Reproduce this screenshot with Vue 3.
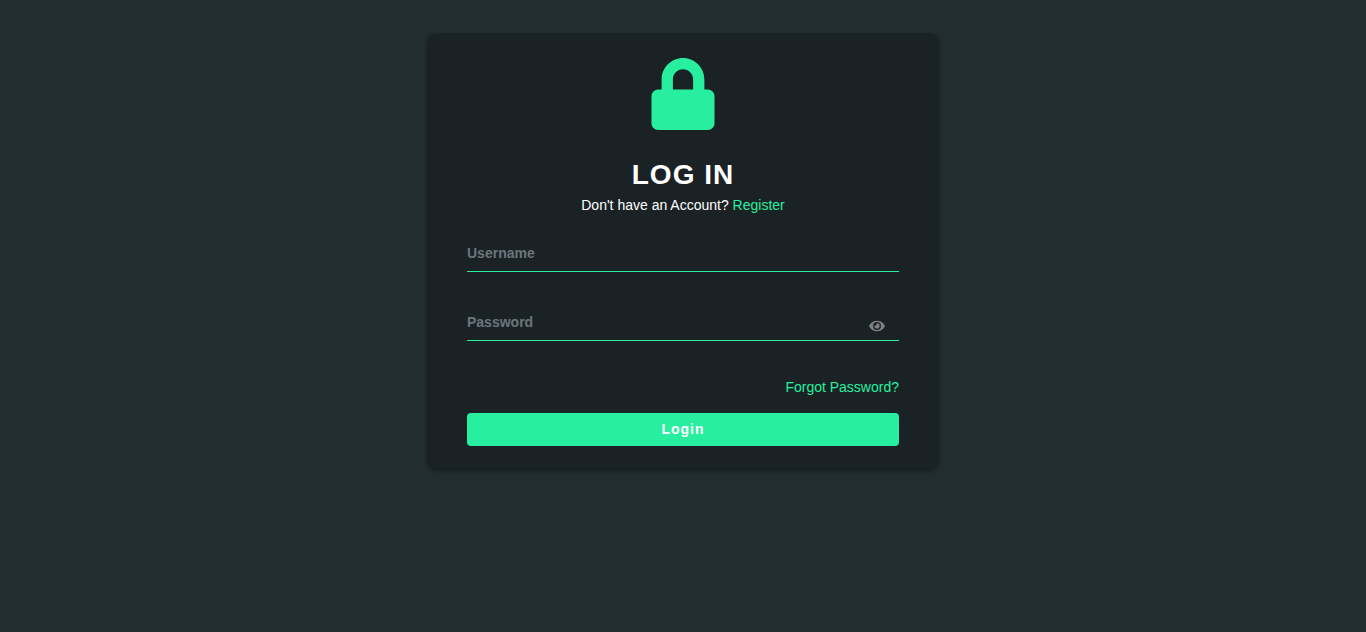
<script setup>
import { ref } from 'vue'

const username = ref('')
const password = ref('')
const visible = ref(false)
</script>

<template>
  <main class="page">
    <section class="card">
      <svg class="lock" viewBox="0 0 448 512" aria-hidden="true">
        <path d="M400 224h-24v-72C376 68.2 307.8 0 224 0S72 68.2 72 152v72H48c-26.5 0-48 21.5-48 48v192c0 26.5 21.5 48 48 48h352c26.5 0 48-21.5 48-48V272c0-26.5-21.5-48-48-48zm-104 0H152v-72c0-39.7 32.3-72 72-72s72 32.3 72 72v72z" />
      </svg>
      <h1 class="title">LOG IN</h1>
      <p class="hint">Don't have an Account? <a href="#register">Register</a></p>
      <form class="form" @submit.prevent>
        <div class="field">
          <input v-model="username" type="text" placeholder="Username" aria-label="Username" autocomplete="username" />
        </div>
        <div class="field">
          <input v-model="password" :type="visible ? 'text' : 'password'" placeholder="Password" aria-label="Password" autocomplete="current-password" />
          <button class="toggle" type="button" aria-label="Show password" @click="visible = !visible">
            <svg viewBox="0 0 576 512" aria-hidden="true">
              <path d="M572.52 241.4C518.29 135.59 410.93 64 288 64S57.68 135.64 3.48 241.41a32.35 32.35 0 0 0 0 29.19C57.71 376.41 165.07 448 288 448s230.32-71.64 284.52-177.41a32.35 32.35 0 0 0 0-29.19zM288 400a144 144 0 1 1 144-144 143.93 143.93 0 0 1-144 144zm0-240a95.31 95.31 0 0 0-25.31 3.79 47.85 47.85 0 0 1-66.9 66.9A95.78 95.78 0 1 0 288 160z" />
            </svg>
          </button>
        </div>
        <a class="forgot" href="#forgot">Forgot Password?</a>
        <button class="submit" type="submit">Login</button>
      </form>
    </section>
  </main>
</template>

<style>
body {
  margin: 0;
  background: #222d32;
}
</style>

<style scoped>
.page {
  display: flex;
  justify-content: center;
  padding: 33px 16px;
  font-family: "Liberation Sans", Arial, sans-serif;
  font-size: 14px;
  line-height: 20px;
  color: #fff;
}

.card {
  box-sizing: border-box;
  width: 100%;
  max-width: 512px;
  padding: 25px 40px 23px;
  display: flex;
  flex-direction: column;
  align-items: center;
  background: #1a2226;
  border-radius: 10px;
  box-shadow: 0 2px 4px rgba(0, 0, 0, 0.16), 0 2px 4px rgba(0, 0, 0, 0.23);
}

.lock {
  display: block;
  width: 64px;
  height: 72px;
  fill: #27ef9f;
}

.title {
  margin: 29px 0 0;
  font-size: 28px;
  line-height: 32px;
  letter-spacing: 1px;
}

.hint {
  margin: 4px 0 0;
}

a {
  color: #27ef9f;
  text-decoration: none;
}

.form {
  align-self: stretch;
  display: flex;
  flex-direction: column;
  margin-top: 20px;
}

.field {
  display: flex;
  position: relative;
  margin-bottom: 32px;
}

.field input {
  box-sizing: border-box;
  width: 100%;
  height: 37px;
  padding: 0;
  border: 0;
  border-bottom: 1px solid #27ef9f;
  background: transparent;
  color: #ecf0f5;
  font: bold 14px "Liberation Sans", Arial, sans-serif;
  outline: 0;
}

.field input::placeholder {
  color: #6c757d;
  opacity: 1;
}

.toggle {
  position: absolute;
  right: 14px;
  bottom: 8px;
  padding: 0;
  border: 0;
  background: none;
  cursor: pointer;
}

.toggle svg {
  display: block;
  width: 16px;
  height: 14px;
  fill: #808080;
}

.forgot {
  align-self: flex-end;
  margin-top: 4px;
}

.submit {
  height: 33px;
  margin-top: 16px;
  padding: 0 0 2px;
  border: 0;
  border-radius: 4px;
  background: #27ef9f;
  color: #fff;
  font: bold 14px "Liberation Sans", Arial, sans-serif;
  letter-spacing: 1px;
  cursor: pointer;
}
</style>
